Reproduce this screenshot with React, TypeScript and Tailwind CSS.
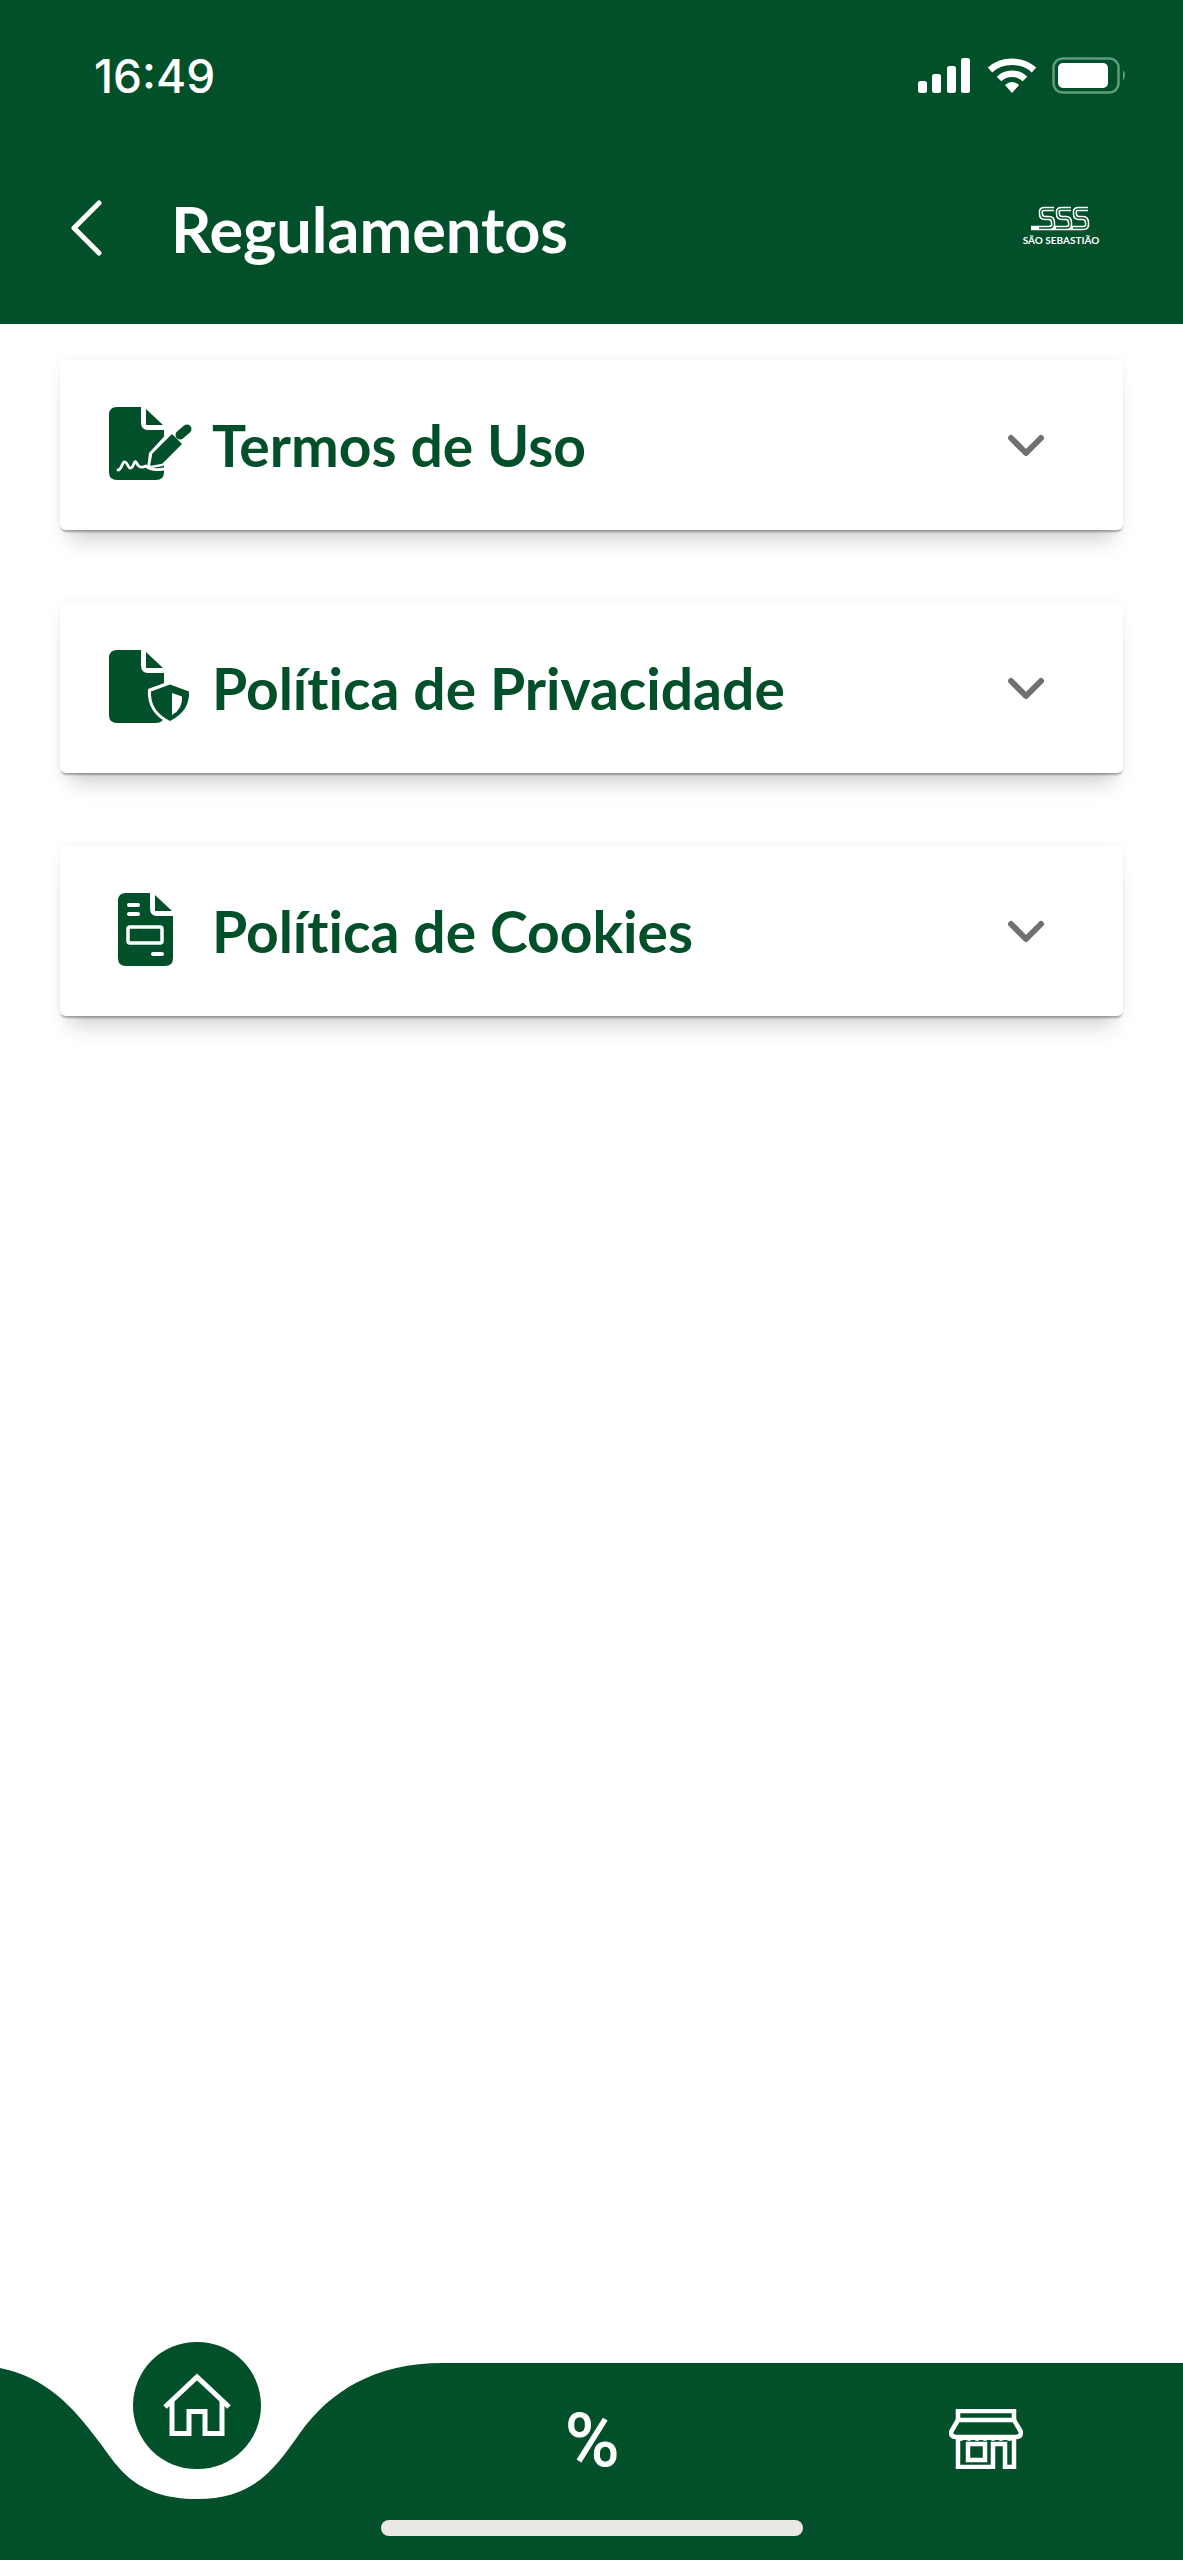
import React from 'react';

const GREEN = '#02502a';

const DocBody = () => (
  <>
    <path d="M9 1H33V16Q33 24 40 24H56V66Q56 74 48 74H9Q1 74 1 66V9Q1 1 9 1Z" fill={GREEN} />
    <path d="M38 3L55 19H38Z" fill={GREEN} />
  </>
);

const TermsIcon = () => (
  <svg width="86" height="76" viewBox="0 0 86 76" fill="none">
    <DocBody />
    <path d="M39 63L41 47L62 24L78 39L55 60Z" fill="#fff" />
    <path d="M43 59L45 48L64 29L73 38L54 57Z" fill={GREEN} strokeLinejoin="round" stroke={GREEN} strokeWidth="1.5" />
    <path d="M72 29L79 23" stroke={GREEN} strokeWidth="9" strokeLinecap="round" />
    <path d="M10 64C14 64 14 55 17 56C20 57 20 63 23 62C26 61 26 54 28 56C30 60 32 63 38 60M38 60C42 64 50 64 56 63" stroke="#fff" strokeWidth="2.8" strokeLinecap="round" />
  </svg>
);

const PrivacyIcon = () => (
  <svg width="86" height="76" viewBox="0 0 86 76" fill="none">
    <DocBody />
    <path d="M62 32L84 40Q86 64 62 75Q38 64 40 40Z" fill="#fff" />
    <path d="M62 35.5L81 42.5Q82 62 62 72Q42 62 43 42.5Z" fill={GREEN} />
    <path d="M64 44L74 47.5Q75 60 64 66Z" fill="#fff" />
  </svg>
);

const CookiesIcon = () => (
  <svg width="86" height="76" viewBox="0 0 86 76" fill="none">
    <g transform="translate(9 0)">
      <DocBody />
      <rect x="10" y="11" width="13" height="4" rx="2" fill="#fff" />
      <rect x="10" y="20" width="13" height="4" rx="2" fill="#fff" />
      <rect x="11" y="35" width="34" height="16" rx="2" stroke="#fff" strokeWidth="3.5" />
      <rect x="34" y="60" width="13" height="4" rx="2" fill="#fff" />
    </g>
  </svg>
);

const Chevron = () => (
  <svg width="38" height="24" viewBox="0 0 38 24" fill="none">
    <path d="M4 4L19 19L34 4" stroke="#707070" strokeWidth="6" strokeLinecap="round" strokeLinejoin="round" />
  </svg>
);

const SectionCard = ({ icon, title }: { icon: React.ReactNode; title: string }) => (
  <div className="flex h-[170px] items-center rounded-md bg-white pl-[48px] pr-[78px] shadow-[0_3px_2px_-1px_rgba(0,0,0,0.3),0_20px_20px_-10px_rgba(0,0,0,0.18),0_0_12px_rgba(0,0,0,0.05)]">
    <div className="-mt-[2px] shrink-0">{icon}</div>
    <span className="ml-[18px] flex-1 font-['Lato',sans-serif] text-[57px] font-bold leading-none text-[#02502a] [font-variant-ligatures:none]">{title}</span>
    <div className="mt-[2px]"><Chevron /></div>
  </div>
);

const SignalBars = () => (
  <svg width="53" height="35" viewBox="0 0 53 35" fill="#fff">
    <rect x="0" y="23" width="9" height="12" rx="2.5" />
    <rect x="14" y="16" width="9" height="19" rx="2.5" />
    <rect x="29" y="8" width="9" height="27" rx="2.5" />
    <rect x="43" y="0" width="9" height="35" rx="2.5" />
  </svg>
);

const Wifi = () => (
  <svg width="50" height="35" viewBox="0 0 50 35" fill="none">
    <path d="M3 12C15 1 35 1 47 12" stroke="#fff" strokeWidth="6.5" />
    <path d="M12 21C19 14 31 14 38 21" stroke="#fff" strokeWidth="6.5" />
    <path d="M18 27Q25 21 32 27L25 35Z" fill="#fff" />
  </svg>
);

const Battery = () => (
  <svg width="76" height="37" viewBox="0 0 76 37" fill="none">
    <rect x="1.5" y="1.5" width="65" height="34" rx="9" stroke="#5f9c7e" strokeWidth="2.5" />
    <rect x="6" y="6" width="50" height="25" rx="5" fill="#fff" />
    <path d="M71 13Q75 18 71 24Z" fill="#5f9c7e" />
  </svg>
);

const Logo = () => (
  <div className="flex w-[80px] flex-col items-center">
    <svg width="60" height="27" viewBox="0 0 60 27" fill="none">
      <g stroke="#fff" strokeWidth="4.5">
        <path d="M23 3H13Q9 3 10 8Q10 12 14 12H18Q22 12 22 17Q23 22 18 22H0" />
        <path d="M40 3H30Q26 3 27 8Q27 12 31 12H35Q39 12 39 17Q40 22 35 22H18" />
        <path d="M57 3H47Q43 3 44 8Q44 12 48 12H52Q56 12 56 17Q57 22 52 22H35" />
      </g>
      <g stroke="#02502a" strokeWidth="1.4">
        <path d="M23 3H13Q9 3 10 8Q10 12 14 12H18Q22 12 22 17Q23 22 18 22H8" />
        <path d="M40 3H30Q26 3 27 8Q27 12 31 12H35Q39 12 39 17Q40 22 35 22H25" />
        <path d="M57 3H47Q43 3 44 8Q44 12 48 12H52Q56 12 56 17Q57 22 52 22H42" />
      </g>
    </svg>
    <span className="mt-[1px] whitespace-nowrap font-['Lato',sans-serif] text-[10px] font-bold leading-[12px] text-white">SÃO SEBASTIÃO</span>
  </div>
);

const HomeIcon = () => (
  <svg width="68" height="63" viewBox="0 0 68 63" fill="none" stroke="#fff" strokeWidth="5">
    <path d="M2 34L34 4L66 34" />
    <path d="M9 28V60.5H26V38.5H42V60.5H59V28" />
  </svg>
);

const StoreIcon = () => (
  <svg width="74" height="60" viewBox="0 0 74 60" fill="none" stroke="#fff" strokeWidth="4.5">
    <rect x="9" y="2" width="56" height="9" />
    <path d="M9 11L2 23Q2 28 7 28H67Q72 28 72 23L65 11" strokeLinejoin="round" />
    <path d="M8 28Q12 33 16 28Q20 33 24 28Q28 33 32 28Q36 33 40 28Q44 33 48 28Q52 33 56 28Q60 33 66 28" strokeWidth="3" />
    <path d="M9 29V58H44V35H56V58H65V29" />
    <rect x="19" y="35" width="17" height="16" />
  </svg>
);

export default function App() {
  return (
    <div className="flex h-[2560px] w-full flex-col overflow-hidden bg-white">
      <header className="h-[324px] shrink-0 bg-[#02502a]">
        <div className="flex h-[150px] items-start justify-between pl-[94px] pr-[55px] pt-[51px] text-white">
          <span className="font-['Inter',sans-serif] text-[46px] font-medium leading-[50px]">16:49</span>
          <div className="flex items-center gap-[16px] pt-[6px]">
            <SignalBars />
            <Wifi />
            <div className="-ml-[1px]"><Battery /></div>
          </div>
        </div>
        <div className="flex h-[174px] items-start pl-[69px] pr-[82px] pt-[50px]">
          <svg width="34" height="56" viewBox="0 0 34 56" fill="none" className="shrink-0">
            <path d="M30 3L5 28L30 53" stroke="#fff" strokeWidth="5" strokeLinecap="round" strokeLinejoin="round" />
          </svg>
          <h1 className="ml-[68px] -mt-[7px] flex-1 font-['Lato',sans-serif] text-[63px] font-bold leading-[72px] text-white">Regulamentos</h1>
          <div className="pt-[6px]"><Logo /></div>
        </div>
      </header>

      <main className="flex flex-1 flex-col gap-[73px] px-[60px] pt-[36px]">
        <SectionCard icon={<TermsIcon />} title="Termos de Uso" />
        <SectionCard icon={<PrivacyIcon />} title="Política de Privacidade" />
        <SectionCard icon={<CookiesIcon />} title="Política de Cookies" />
      </main>

      <footer className="relative flex h-[197px] shrink-0 items-start pl-[550px] pt-[42px]">
        <svg className="absolute inset-0" width="1183" height="197" viewBox="0 0 1183 197" fill="#02502a">
          <path d="M0 5C45 14 72 42 100 80C118 104 135 136 197 136C255 136 275 105 300 70C330 28 375 0 443 0H1183V197H0Z" />
        </svg>
        <div className="absolute left-[133px] top-[-21px] flex h-[127px] w-[128px] items-center justify-center rounded-full bg-[#02502a] pb-[3px]">
          <HomeIcon />
        </div>
        <span className="relative w-[84px] text-center font-['Roboto',sans-serif] text-[74px] leading-[72px] text-white [-webkit-text-stroke:1px_white]">%</span>
        <div className="relative ml-[315px] mt-[4px]"><StoreIcon /></div>
        <div className="absolute bottom-[24px] left-[381px] h-[16px] w-[422px] rounded-full bg-[#e9e9e5]" />
      </footer>
    </div>
  );
}
